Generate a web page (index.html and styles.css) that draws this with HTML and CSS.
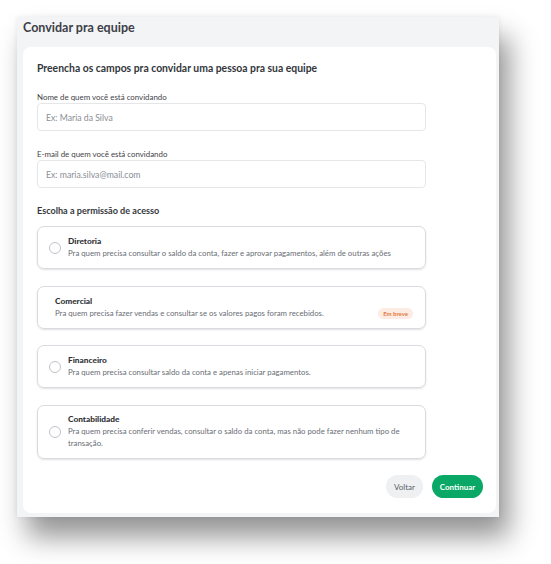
FILE: index.html
```html
<!DOCTYPE html>
<html lang="pt-BR">
<head>
<meta charset="utf-8">
<link rel="stylesheet" href="styles.css">
</head>
<body>
<div class="panel">
  <h1 class="page-title">Convidar pra equipe</h1>
  <div class="card">
    <h2 class="card-title">Preencha os campos pra convidar uma pessoa pra sua equipe</h2>
    <div class="field">
      <label class="label">Nome de quem você está convidando</label>
      <div class="input">Ex: Maria da Silva</div>
    </div>
    <div class="field">
      <label class="label">E-mail de quem você está convidando</label>
      <div class="input">Ex: maria.silva@mail.com</div>
    </div>
    <div class="section-title">Escolha a permissão de acesso</div>
    <div class="options">
      <div class="option">
        <span class="radio"></span>
        <div class="opt-text">
          <div class="opt-title">Diretoria</div>
          <div class="opt-desc">Pra quem precisa consultar o saldo da conta, fazer e aprovar pagamentos, além de outras ações</div>
        </div>
      </div>
      <div class="option disabled">
        <div class="opt-text">
          <div class="opt-title">Comercial</div>
          <div class="opt-desc">Pra quem precisa fazer vendas e consultar se os valores pagos foram recebidos.</div>
        </div>
        <span class="badge">Em breve</span>
      </div>
      <div class="option">
        <span class="radio"></span>
        <div class="opt-text">
          <div class="opt-title">Financeiro</div>
          <div class="opt-desc">Pra quem precisa consultar saldo da conta e apenas iniciar pagamentos.</div>
        </div>
      </div>
      <div class="option tall">
        <span class="radio"></span>
        <div class="opt-text">
          <div class="opt-title">Contabilidade</div>
          <div class="opt-desc">Pra quem precisa conferir vendas, consultar o saldo da conta, mas não pode fazer nenhum tipo de transação.</div>
        </div>
      </div>
    </div>
    <div class="actions">
      <button class="btn btn-back">Voltar</button>
      <button class="btn btn-next">Continuar</button>
    </div>
  </div>
</div>
</body>
</html>
```
FILE: styles.css
```css
* { box-sizing: border-box; }
html, body { margin: 0; padding: 0; background: #ffffff; }
body {
  font-family: Lato, "Open Sans", sans-serif;
  color: #3a3d42;
  padding: 17px 0 0 17px;
  min-height: 100vh;
}
.panel {
  width: 482px;
  height: 500px;
  background: #f3f4f6;
  box-shadow: 10px 20px 26px rgba(0,0,0,0.42), 0 0 5px rgba(0,0,0,0.07);
  padding: 0 3px 0 6px;
  display: flex;
  flex-direction: column;
}
.page-title {
  margin: 0;
  font-size: 12.5px;
  font-weight: 700;
  color: #3c4047;
  height: 30px;
  line-height: 22px;
}
.card {
  background: #fff;
  border-radius: 8px;
  height: 466px;
  padding: 13px 70px 0 14px;
  display: flex;
  flex-direction: column;
}
.card-title {
  margin: 0;
  font-size: 10.4px;
  font-weight: 700;
  color: #33363b;
  line-height: 16px;
}
.field { margin-top: 16px; }
.field + .field { margin-top: 18px; }
.label {
  display: block;
  font-size: 7.9px;
  color: #3f4348;
  line-height: 10px;
  margin-bottom: 1px;
}
.input {
  height: 28px;
  border: 1px solid #e4e6ea;
  border-radius: 4px;
  font-size: 8.7px;
  color: #8a8e94;
  padding: 0 8px;
  display: flex;
  align-items: center;
}
.section-title {
  margin-top: 17px;
  font-size: 9.1px;
  font-weight: 700;
  color: #34373c;
  line-height: 12px;
}
.options {
  margin-top: 9px;
  display: flex;
  flex-direction: column;
  gap: 16.5px;
}
.option {
  height: 43px;
  border: 1px solid #d9dbe0;
  border-radius: 7px;
  box-shadow: 0 1px 2px rgba(0,0,0,0.12);
  display: flex;
  align-items: center;
  padding: 0 12px 0 11px;
  gap: 7px;
}
.option.tall { height: 54px; }
.option.disabled { padding-left: 17px; }
.radio {
  flex: none;
  width: 12px;
  height: 12px;
  border: 1px solid #bfc2c7;
  border-radius: 50%;
  margin-top: 1px;
}
.opt-text { flex: 1; }
.opt-title {
  font-size: 8.3px;
  font-weight: 900;
  color: #2f3237;
  line-height: 11px;
}
.opt-desc {
  font-size: 7.8px;
  color: #6a6e75;
  line-height: 12px;
}
.badge {
  flex: none;
  background: #fdece3;
  color: #e27a3f;
  font-size: 6px;
  font-weight: 700;
  padding: 2px 5px;
  border-radius: 7px;
  margin-top: 12px;
}
.actions {
  margin-top: auto;
  margin-bottom: 15px;
  margin-right: -57px;
  display: flex;
  justify-content: flex-end;
  gap: 9px;
}
.btn {
  border: none;
  height: 23px;
  border-radius: 12px;
  font-family: Lato, sans-serif;
  font-size: 8px;
  padding: 0;
}
.btn-back { background: #eef0f2; color: #5a5e64; width: 37px; }
.btn-next { background: #0aa866; color: #fff; font-weight: 700; width: 51px; }
```
